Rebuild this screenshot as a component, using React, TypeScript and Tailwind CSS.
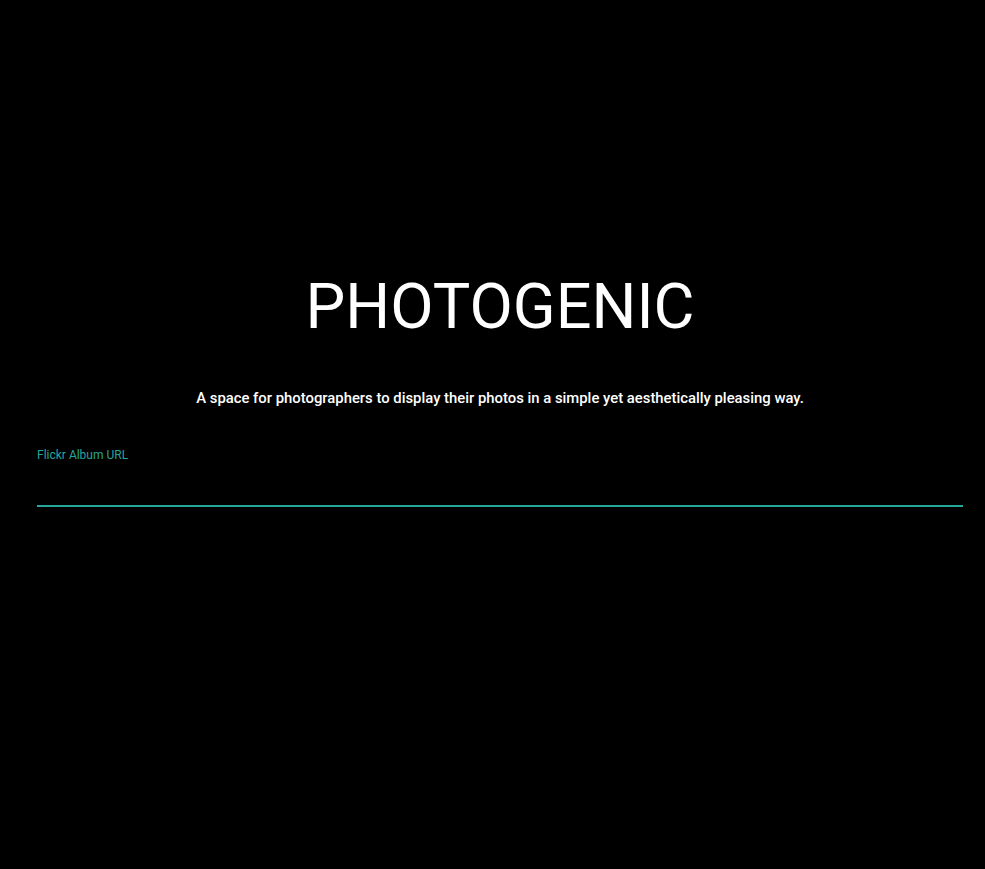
export default function App() {
  return (
    <div className="min-h-[869px] w-full bg-black text-white" style={{ fontFamily: "Roboto, 'Liberation Sans', sans-serif" }}>
      <div className="pl-[37px] pr-[22px]">
        <div className="pt-[259px] flex flex-col items-center">
          <h1 className="text-[63px] leading-[96px] font-normal tracking-normal">PHOTOGENIC</h1>
          <p className="mt-[32px] text-[14.85px] leading-[22px] font-medium">A space for photographers to display their photos in a simple yet aesthetically pleasing way.</p>
        </div>
        <div className="mt-[38px]">
          <label className="block text-[12px] leading-[16px] text-[#26a69a]">Flickr Album URL</label>
          <input className="block w-full h-[44px] bg-transparent outline-none border-b-2 border-[#26a69a] text-white" type="text" />
        </div>
      </div>
    </div>
  );
}
